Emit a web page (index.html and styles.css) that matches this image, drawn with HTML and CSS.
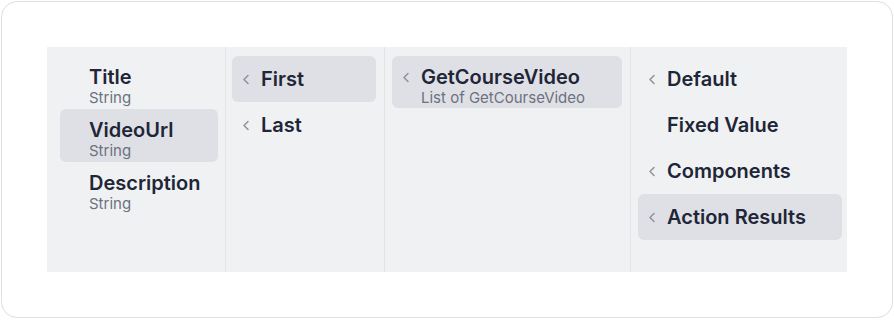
FILE: index.html
```html
<!DOCTYPE html>
<html lang="en">
<head>
    <meta charset="UTF-8">
    <meta name="viewport" content="width=device-width, initial-scale=1.0">
    <title>Picker</title>
    <link rel="stylesheet" href="styles.css">
</head>
<body>
    <div class="card">
        <div class="panel">
            <div class="col col-fields">
                <div class="item two-line">
                    <span class="chev"></span>
                    <div class="label"><div class="name">Title</div><div class="type">String</div></div>
                </div>
                <div class="item two-line active">
                    <span class="chev"></span>
                    <div class="label"><div class="name">VideoUrl</div><div class="type">String</div></div>
                </div>
                <div class="item two-line">
                    <span class="chev"></span>
                    <div class="label"><div class="name">Description</div><div class="type">String</div></div>
                </div>
            </div>
            <div class="col col-pick">
                <div class="item active">
                    <svg class="chev" viewBox="0 0 8 11"><path d="M6 1.5 L2 5.5 L6 9.5"/></svg>
                    <div class="label"><div class="name">First</div></div>
                </div>
                <div class="item">
                    <svg class="chev" viewBox="0 0 8 11"><path d="M6 1.5 L2 5.5 L6 9.5"/></svg>
                    <div class="label"><div class="name">Last</div></div>
                </div>
            </div>
            <div class="col col-source">
                <div class="item two-line active">
                    <svg class="chev" viewBox="0 0 8 11"><path d="M6 1.5 L2 5.5 L6 9.5"/></svg>
                    <div class="label"><div class="name">GetCourseVideo</div><div class="type">List of GetCourseVideo</div></div>
                </div>
            </div>
            <div class="col col-kind">
                <div class="item">
                    <svg class="chev" viewBox="0 0 8 11"><path d="M6 1.5 L2 5.5 L6 9.5"/></svg>
                    <div class="label"><div class="name">Default</div></div>
                </div>
                <div class="item">
                    <span class="chev"></span>
                    <div class="label"><div class="name">Fixed Value</div></div>
                </div>
                <div class="item">
                    <svg class="chev" viewBox="0 0 8 11"><path d="M6 1.5 L2 5.5 L6 9.5"/></svg>
                    <div class="label"><div class="name">Components</div></div>
                </div>
                <div class="item active">
                    <svg class="chev" viewBox="0 0 8 11"><path d="M6 1.5 L2 5.5 L6 9.5"/></svg>
                    <div class="label"><div class="name">Action Results</div></div>
                </div>
            </div>
        </div>
    </div>
</body>
</html>
```

FILE: styles.css
```css
html, body {
    margin: 0;
    background: #fff;
}

body {
    font-family: Inter, "Noto Sans", sans-serif;
    color: #1e2638;
}

.card {
    margin: 1px;
    width: 800px;
    height: 225px;
    padding: 45px;
    border: 1px solid #dcdfe3;
    border-radius: 16px;
}

.panel {
    display: flex;
    height: 225px;
    background-color: #f0f1f3;
}

.col {
    display: flex;
    flex-direction: column;
    padding-top: 9px;
    border-right: 1px solid #e1e3e6;
}

.col:last-child {
    border-right: none;
}

.col-fields {
    width: 158px;
    padding-left: 13px;
    padding-right: 7px;
}

.col-pick {
    width: 144px;
    padding-left: 6px;
    padding-right: 8px;
}

.col-source {
    width: 230px;
    padding-left: 7px;
    padding-right: 8px;
}

.col-kind {
    width: 204px;
    padding-left: 7px;
    padding-right: 5px;
}

.item {
    display: flex;
    align-items: center;
    height: 46px;
    padding-left: 10px;
    border-radius: 6px;
    box-sizing: border-box;
}

.item.two-line {
    align-items: flex-start;
    height: 53px;
    padding-top: 10px;
}

.col-source .item.two-line {
    height: 52px;
}

.item.active {
    background-color: #dfe0e5;
}

.chev {
    width: 8px;
    height: 11px;
    margin-right: 11px;
    flex: none;
}

.two-line .chev {
    margin-top: 6px;
}

svg.chev path {
    fill: none;
    stroke: #8c919b;
    stroke-width: 1.5;
    stroke-linecap: round;
    stroke-linejoin: round;
}

.name {
    font-size: 20px;
    font-weight: 600;
    line-height: 23px;
}

.type {
    font-size: 15px;
    line-height: 17px;
    color: #6b7180;
}
```
